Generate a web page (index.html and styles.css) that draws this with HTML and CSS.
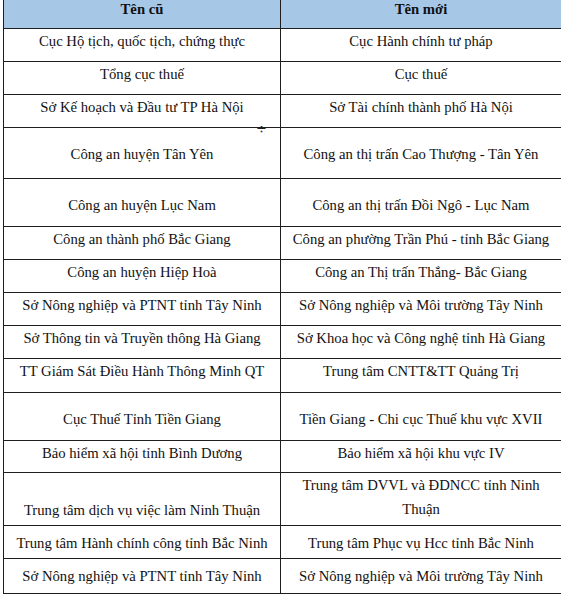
FILE: index.html
```html
<!DOCTYPE html>
<html lang="vi">
<head>
<meta charset="utf-8">
<link rel="stylesheet" href="styles.css">
</head>
<body>
<div class="wrap">
  <table class="tbl">
    <colgroup><col class="c1"><col class="c2"></colgroup>
    <thead>
      <tr class="hd"><th>Tên cũ</th><th>Tên mới</th></tr>
    </thead>
    <tbody>
      <tr class="h33"><td>Cục Hộ tịch, quốc tịch, chứng thực</td><td>Cục Hành chính tư pháp</td></tr>
      <tr class="h33"><td>Tổng cục thuế</td><td>Cục thuế</td></tr>
      <tr class="h33"><td>Sở Kế hoạch và Đầu tư TP Hà Nội</td><td>Sở Tài chính thành phố Hà Nội</td></tr>
      <tr class="h51 mid"><td>Công an huyện Tân Yên</td><td>Công an thị trấn Cao Thượng - Tân Yên</td></tr>
      <tr class="h48 mid"><td>Công an huyện Lục Nam</td><td>Công an thị trấn Đồi Ngô - Lục Nam</td></tr>
      <tr class="h33"><td>Công an thành phố Bắc Giang</td><td>Công an phường Trần Phú - tỉnh Bắc Giang</td></tr>
      <tr class="h33"><td>Công an huyện Hiệp Hoà</td><td>Công an Thị trấn Thắng- Bắc Giang</td></tr>
      <tr class="h33"><td>Sở Nông nghiệp và PTNT tỉnh Tây Ninh</td><td>Sở Nông nghiệp và Môi trường Tây Ninh</td></tr>
      <tr class="h33"><td>Sở Thông tin và Truyền thông Hà Giang</td><td>Sở Khoa học và Công nghệ tỉnh Hà Giang</td></tr>
      <tr class="h34"><td>TT Giám Sát Điều Hành Thông Minh QT</td><td>Trung tâm CNTT&amp;TT Quảng Trị</td></tr>
      <tr class="h48 mid"><td>Cục Thuế Tỉnh Tiền Giang</td><td>Tiền Giang - Chi cục Thuế khu vực XVII</td></tr>
      <tr class="h32"><td>Bảo hiểm xã hội tỉnh Bình Dương</td><td>Bảo hiểm xã hội khu vực IV</td></tr>
      <tr class="h53"><td class="low">Trung tâm dịch vụ việc làm Ninh Thuận</td><td>Trung tâm DVVL và ĐDNCC tỉnh Ninh Thuận</td></tr>
      <tr class="h33 lo"><td>Trung tâm Hành chính công tỉnh Bắc Ninh</td><td>Trung tâm Phục vụ Hcc tỉnh Bắc Ninh</td></tr>
      <tr class="h35 lo"><td>Sở Nông nghiệp và PTNT tỉnh Tây Ninh</td><td>Sở Nông nghiệp và Môi trường Tây Ninh</td></tr>
    </tbody>
  </table>
  <span class="handle">÷</span>
</div>
</body>
</html>
```
FILE: styles.css
```css
html, body {
  margin: 0;
  padding: 0;
  background: #ffffff;
}
.wrap {
  position: relative;
  padding-left: 3px;
  width: 558px;
}
.tbl {
  border-collapse: collapse;
  width: 558px;
  table-layout: fixed;
  font-family: "Liberation Serif", "Times New Roman", serif;
  font-size: 14.7px;
  color: #111111;
}
.c1 { width: 277px; }
.c2 { width: 281px; }
.tbl th, .tbl td {
  border: 1px solid #1e1e1e;
  text-align: center;
  vertical-align: top;
  padding: 0 3px;
  line-height: 24px;
  box-sizing: border-box;
}
.tbl thead th {
  border-top: none;
  background: #a7c7e7;
  font-weight: bold;
  height: 28px;
  padding-top: 0;
  line-height: 18px;
}
.h32 td { height: 32px; }
.h33 td { height: 33px; }
.h34 td { height: 34px; }
.h35 td { height: 35px; }
.h48 td { height: 48px; }
.h51 td { height: 51px; }
.h53 td { height: 53px; }
.mid td { padding-top: 14px; }
.lo td { padding-top: 5px; }
.tbl td.low { padding-top: 25px; }
.handle {
  position: absolute;
  left: 256px;
  top: 122px;
  font-family: "DejaVu Sans", sans-serif;
  font-size: 13px;
  color: #222;
  line-height: 14px;
}
```
